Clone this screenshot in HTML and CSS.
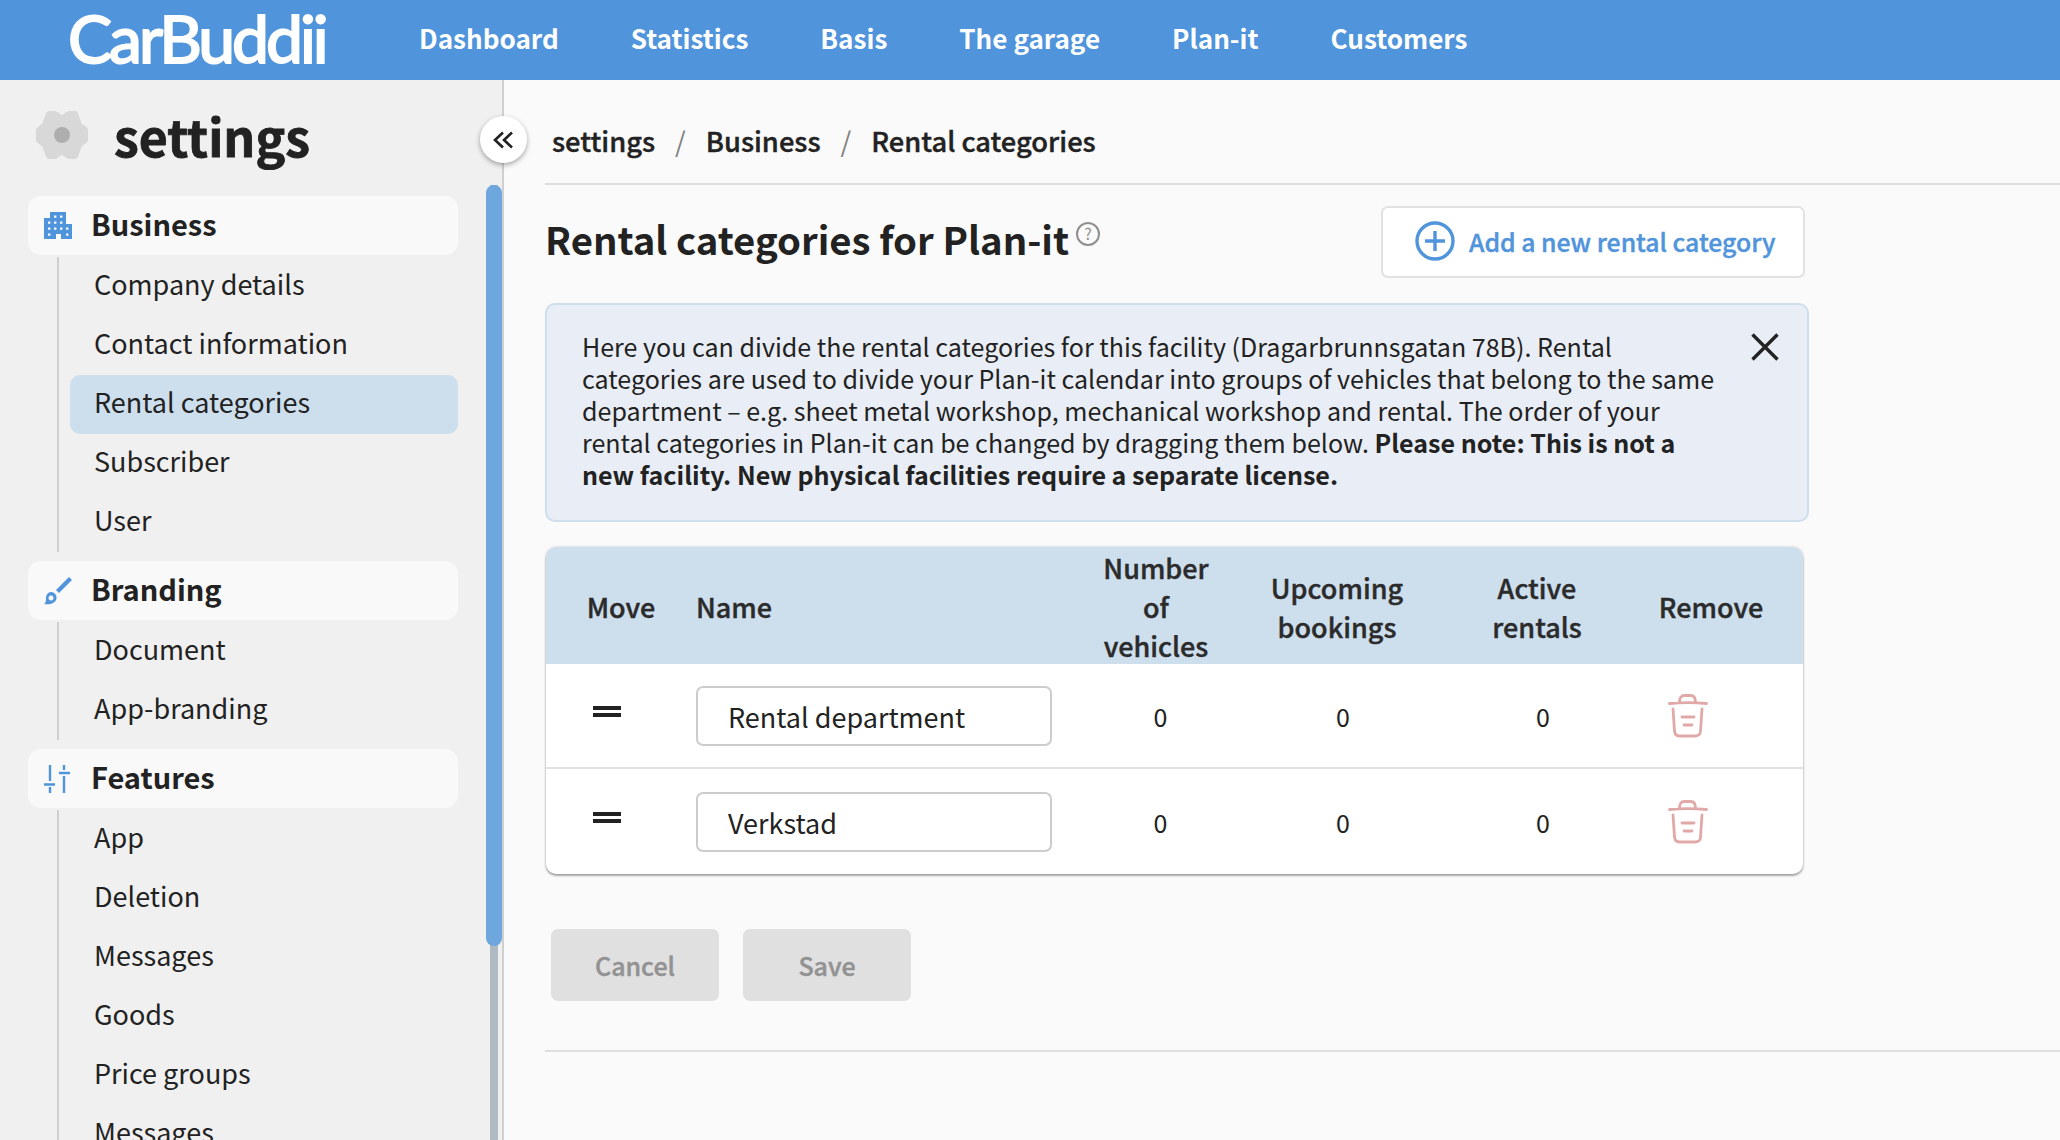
FILE: index.html
```html
<!DOCTYPE html>
<html lang="en">
<head>
    <meta charset="UTF-8">
    <title>Rental categories</title>
    <link rel="stylesheet" href="styles.css">
</head>
<body>
    <div class="header">
        <a href="#" class="logo">CarBuddii</a>
        <div class="top-nav">
            <a href="#">Dashboard</a>
            <a href="#">Statistics</a>
            <a href="#">Basis</a>
            <a href="#">The garage</a>
            <a href="#">Plan-it</a>
            <a href="#">Customers</a>
        </div>
    </div>

    <div class="layout">
        <div class="sidebar">
            <button class="collapse-btn">
                <svg width="21" height="18" viewBox="0 0 21 18" fill="none" stroke="#222" stroke-width="2.600"><path d="M10 1.500 2 9l8 7.500M19 1.500 11 9l8 7.500"/></svg>
            </button>
            <div class="side-title">
                <svg class="gear" width="52" height="48" viewBox="0 0 52 48">
                    <polygon fill="#d8d8d8" stroke="#d8d8d8" stroke-width="6" stroke-linejoin="round" points="13,3 19,3 26,8 33,3 39,3 43,14 49,19 49,29 43,34 39,45 33,45 26,40 19,45 13,45 9,34 3,29 3,19 9,14"/>
                    <circle cx="26" cy="24" r="8" fill="#aeaeae"/>
                </svg>
                <h1>settings</h1>
            </div>
            <div class="side-scroll">
                <div class="side-menu">
                    <div class="group-title">
                        <svg width="28" height="28" viewBox="0 0 28 28" fill="#5094dc"><path fill-rule="evenodd" d="M0 27V6h6V0h16v12h6v15H17v-5h-5v5zM10 3.400h2.400v2.400H10zm6 0h2.400v2.400H16zM4 9.400h2.400v2.400H4zm6 0h2.400v2.400H10zm6 0h2.400v2.400H16zM4 15.400h2.400v2.400H4zm6 0h2.400v2.400H10zm6 0h2.400v2.400H16zm6 0h2.400v2.400H22zM4 21.400h2.400v2.400H4zm18 0h2.400v2.400H22z"/></svg>
                        <span>Business</span>
                    </div>
                    <div class="group-items">
                        <a href="#">Company details</a>
                        <a href="#">Contact information</a>
                        <a href="#" class="active">Rental categories</a>
                        <a href="#">Subscriber</a>
                        <a href="#">User</a>
                    </div>
                    <div class="group-title">
                        <svg width="28" height="28" viewBox="0 0 28 28" fill="#5094dc"><path d="M25 0 28 3 15 16l-3-3z"/><path fill-rule="evenodd" d="M7 15a5.500 5.500 0 0 1 5.500 6.500C12 26 6 28 0 27c2-1 2-3 2-6a5.500 5.500 0 0 1 5-6zm0 3.500a2.500 2.500 0 1 0 .01 0z"/></svg>
                        <span>Branding</span>
                    </div>
                    <div class="group-items">
                        <a href="#">Document</a>
                        <a href="#">App-branding</a>
                    </div>
                    <div class="group-title">
                        <svg width="28" height="28" viewBox="0 0 28 28" fill="none" stroke="#5094dc" stroke-width="2.400"><path d="M6 0v16M6 22v6M0 19.500h11M20 0v5M20 11v17M15 8h11"/></svg>
                        <span>Features</span>
                    </div>
                    <div class="group-items">
                        <a href="#">App</a>
                        <a href="#">Deletion</a>
                        <a href="#">Messages</a>
                        <a href="#">Goods</a>
                        <a href="#">Price groups</a>
                        <a href="#">Messages</a>
                    </div>
                </div>
                <div class="scroll-track"><div class="scroll-thumb"></div></div>
            </div>
        </div>

        <div class="main">
            <div class="breadcrumb">
                <a href="#">settings</a>
                <span class="sep">/</span>
                <a href="#">Business</a>
                <span class="sep">/</span>
                <a href="#">Rental categories</a>
            </div>

            <div class="content">
                <div class="title-row">
                    <h2>Rental categories for Plan-it<span class="help">?</span></h2>
                    <button class="add-btn">
                        <svg width="40" height="40" viewBox="0 0 40 40" fill="none" stroke="#5094dc" stroke-width="3.400"><circle cx="20" cy="20" r="18"/><path d="M20 10v20M10 20h20"/></svg>
                        Add a new rental category
                    </button>
                </div>

                <div class="notice">
                    <p>Here you can divide the rental categories for this facility (Dragarbrunnsgatan 78B). Rental categories are used to divide your Plan-it calendar into groups of vehicles that belong to the same department – e.g. sheet metal workshop, mechanical workshop and rental. The order of your rental categories in Plan-it can be changed by dragging them below. <strong>Please note: This is not a new facility. New physical facilities require a separate license.</strong></p>
                    <svg class="notice-close" width="28" height="28" viewBox="0 0 28 28" stroke="#222" stroke-width="3.400" fill="none"><path d="M1.500 1.500l25 25M26.500 1.500l-25 25"/></svg>
                </div>

                <div class="table">
                    <div class="row head">
                        <div class="c-move">Move</div>
                        <div class="c-name">Name</div>
                        <div>Number<br>of<br>vehicles</div>
                        <div>Upcoming<br>bookings</div>
                        <div>Active<br>rentals</div>
                        <div>Remove</div>
                    </div>
                    <div class="row item">
                        <div><span class="drag"></span></div>
                        <div class="c-name"><input type="text" value="Rental department"></div>
                        <div>0</div>
                        <div>0</div>
                        <div>0</div>
                        <div>
                            <svg class="trash" width="40" height="44" viewBox="0 0 40 44" fill="none" stroke="#e0a9a7" stroke-width="2.800" stroke-linecap="round" stroke-linejoin="round"><path d="M1.500 9.500c12-1.200 25-1.200 37 0M11.500 8c0-4 1.500-6.500 5-6.500h6c3.500 0 5 2.500 5 6.500M5 15l1.500 22c.3 3 2 5 5 5h16c3 0 5-2 5-5L34 15M14 23h12M16 31h8"/></svg>
                        </div>
                    </div>
                    <div class="row item">
                        <div><span class="drag"></span></div>
                        <div class="c-name"><input type="text" value="Verkstad"></div>
                        <div>0</div>
                        <div>0</div>
                        <div>0</div>
                        <div>
                            <svg class="trash" width="40" height="44" viewBox="0 0 40 44" fill="none" stroke="#e0a9a7" stroke-width="2.800" stroke-linecap="round" stroke-linejoin="round"><path d="M1.500 9.500c12-1.200 25-1.200 37 0M11.500 8c0-4 1.500-6.500 5-6.500h6c3.500 0 5 2.500 5 6.500M5 15l1.500 22c.3 3 2 5 5 5h16c3 0 5-2 5-5L34 15M14 23h12M16 31h8"/></svg>
                        </div>
                    </div>
                </div>

                <div class="actions">
                    <button>Cancel</button>
                    <button>Save</button>
                </div>
            </div>
            <div class="bottom-line"></div>
        </div>
    </div>
</body>
</html>
```

FILE: styles.css
```css
* {
    margin: 0;
    padding: 0;
    box-sizing: border-box;
    font-family: "Noto Sans CJK SC", "Noto Sans", sans-serif;
}
html, body {
    height: 100%;
    overflow: hidden;
}
body {
    background: #fafafa;
    color: #222;
    display: flex;
    flex-direction: column;
    font-size: 27px;
}
a {
    color: inherit;
    text-decoration: none;
}
.header {
    height: 80px;
    flex-shrink: 0;
    background: #5094dc;
    display: flex;
    align-items: center;
    color: white;
}
.logo {
    width: 419px;
    padding: 0 0 5px 68px;
    font-family: "Lato", sans-serif;
    font-size: 66px;
    line-height: 75px;
    letter-spacing: -3px;
    -webkit-text-stroke: 2px white;
    color: white;
}
.top-nav {
    display: flex;
    gap: 72px;
    padding-bottom: 5px;
}
.top-nav a {
    font-size: 26.100px;
    font-weight: 600;
    line-height: 40px;
    color: white;
}
.layout {
    flex: 1;
    display: flex;
    min-height: 0;
}
.sidebar {
    width: 504px;
    flex-shrink: 0;
    background: #f0f0f0;
    border-right: 2px solid #d0d0d0;
    position: relative;
    display: flex;
    flex-direction: column;
}
.collapse-btn {
    position: absolute;
    top: 36px;
    right: -25px;
    width: 47px;
    height: 47px;
    border: none;
    border-radius: 50%;
    background: white;
    box-shadow: 0 2px 5px rgba(0, 0, 0, 0.35);
    display: flex;
    align-items: center;
    justify-content: center;
    z-index: 2;
}
.side-title {
    height: 116px;
    flex-shrink: 0;
    display: flex;
    align-items: center;
    gap: 26px;
    padding: 0 0 6px 36px;
}
.side-title h1 {
    font-size: 50px;
    line-height: 60px;
    font-weight: 700;
    -webkit-text-stroke: 0.8px #222;
}
.side-scroll {
    flex: 1;
    display: flex;
    min-height: 0;
}
.side-menu {
    width: 430px;
    margin-left: 28px;
    overflow: hidden;
}
.group-title {
    height: 59px;
    background: #f9f9f9;
    border-radius: 13px;
    display: flex;
    align-items: center;
    gap: 19px;
    padding-left: 16px;
    font-size: 29px;
    font-weight: 600;
    line-height: 40px;
}
.group-title span {
    margin-top: -6px;
}
.group-items {
    margin: 2px 0 9px 29px;
    border-left: 2px solid #cfcfcf;
    padding-left: 11px;
    display: flex;
    flex-direction: column;
}
.group-items a {
    height: 59px;
    line-height: 54px;
    padding-left: 24px;
    border-radius: 10px;
    font-size: 27px;
}
.group-items a.active {
    background: #cddeed;
}
.scroll-track {
    position: relative;
    width: 16px;
    margin: -11px 0 0 28px;
    padding: 0 4px;
}
.scroll-track::before {
    content: "";
    display: block;
    height: 100%;
    background: #b0bac3;
}
.scroll-thumb {
    position: absolute;
    top: 0;
    left: 0;
    width: 16px;
    height: 761px;
    background: #6ea6de;
    border-radius: 8px;
}
.main {
    flex: 1;
    min-width: 0;
    padding-left: 41px;
}
.breadcrumb {
    height: 105px;
    display: flex;
    align-items: center;
    gap: 20px;
    padding: 16px 0 0 7px;
    border-bottom: 2px solid #dedede;
    font-size: 27.300px;
    font-weight: 500;
    line-height: 40px;
    -webkit-text-stroke: 0.4px #222;
}
.breadcrumb .sep {
    color: #808080;
    font-weight: 400;
    -webkit-text-stroke: 0;
}
.content {
    width: 1264px;
}
.title-row {
    display: flex;
    justify-content: space-between;
    padding: 21px 4px 0 0;
    height: 118px;
}
.title-row h2 {
    font-size: 38.300px;
    line-height: 66px;
    font-weight: 600;
    display: flex;
    align-items: flex-start;
    height: 66px;
}
.help {
    width: 24px;
    height: 24px;
    margin: 16px 0 0 7px;
    border: 2px solid #8f8f8f;
    border-radius: 50%;
    color: #8f8f8f;
    font-size: 16px;
    font-weight: 400;
    line-height: 19px;
    text-align: center;
}
.add-btn {
    width: 424px;
    height: 72px;
    margin-left: -1px;
    background: white;
    border: 2px solid #e2e2e2;
    border-radius: 7px;
    display: flex;
    align-items: center;
    gap: 14px;
    padding: 0 0 2px 32px;
    white-space: nowrap;
    color: #5094dc;
    font-size: 24.800px;
    font-weight: 500;
    -webkit-text-stroke: 0.4px #5094dc;
}
.notice {
    height: 219px;
    background: #e9eef6;
    border: 2px solid #cddeed;
    border-radius: 10px;
    display: flex;
    justify-content: space-between;
    align-items: flex-start;
    padding: 25px 28px 0 35px;
}
.notice p {
    width: 1140px;
    font-size: 25.050px;
    line-height: 32px;
}
.notice strong {
    font-weight: 700;
}
.notice-close {
    margin-top: 3px;
}
.table {
    margin-top: 25px;
    width: 1257px;
    margin-left: 1px;
    background: white;
    border-radius: 10px;
    overflow: hidden;
    box-shadow: 0 2px 2px rgba(0, 0, 0, 0.3), 0 0 3px rgba(0, 0, 0, 0.2);
}
.row {
    display: grid;
    align-items: center;
    text-align: center;
}
.row.head {
    grid-template-columns: 150px 360px 200px 162px 238px 110px;
    height: 117px;
    padding-top: 1px;
    background: #cddeed;
    font-size: 27px;
    font-weight: 500;
    line-height: 39px;
    color: #2b2b2b;
    -webkit-text-stroke: 0.4px #2b2b2b;
}
.row.item {
    grid-template-columns: 122px 388px 209px 156px 244px 48px;
    height: 105px;
    border-bottom: 2px solid #e2e2e2;
    font-size: 25px;
}
.row.item:last-child {
    border-bottom: none;
    height: 105px;
}
.c-name {
    text-align: left;
}
.row.item .c-name {
    padding-left: 28px;
}
.row input {
    width: 356px;
    height: 60px;
    border: 2px solid #cccccc;
    border-radius: 7px;
    padding: 1px 0 0 30px;
    color: #222;
    font-size: 27px;
}
.drag {
    display: block;
    width: 28px;
    height: 11px;
    margin: 0 auto 9px;
    border-top: 4px solid #222;
    border-bottom: 4px solid #222;
}
.trash {
    display: block;
    margin: 0 auto 0 3px;
}
.actions {
    margin: 55px 0 0 6px;
    display: flex;
    gap: 24px;
}
.actions button {
    width: 168px;
    height: 72px;
    border: none;
    border-radius: 7px;
    background: #e0e0e0;
    color: #929292;
    font-size: 25px;
    font-weight: 500;
    -webkit-text-stroke: 0.4px #929292;
}
.bottom-line {
    margin-top: 49px;
    border-top: 2px solid #dedede;
}
```
